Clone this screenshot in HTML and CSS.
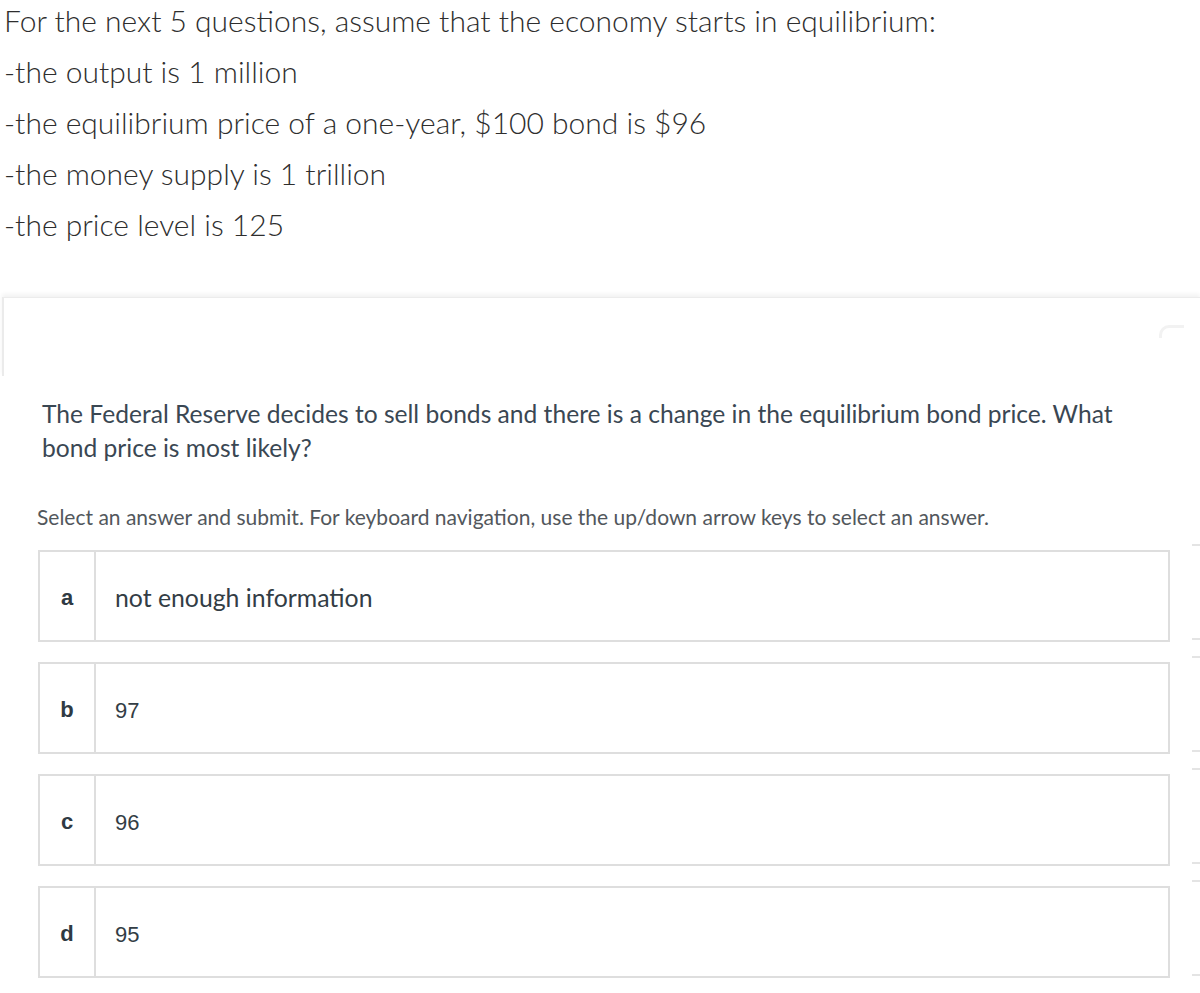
FILE: index.html
```html
<!DOCTYPE html>
<html lang="en">
<head>
<meta charset="utf-8">
<title>Question</title>
<link rel="stylesheet" href="styles.css">
</head>
<body>
<div class="intro">
  <p>For the next 5 questions, assume that the economy starts in equilibrium:</p>
  <p>-the output is 1 million</p>
  <p>-the equilibrium price of a one-year, $100 bond is $96</p>
  <p>-the money supply is 1 trillion</p>
  <p>-the price level is 125</p>
</div>
<div class="card">
  <div class="card-head"><span class="corner"></span></div>
  <div class="question">The Federal Reserve decides to sell bonds and there is a change in the equilibrium bond price. What bond price is most likely?</div>
  <div class="hint">Select an answer and submit. For keyboard navigation, use the up/down arrow keys to select an answer.</div>
  <div class="options">
    <div class="row">
      <div class="option"><div class="letter">a</div><div class="label">not enough information</div></div>
      <div class="stub"></div>
    </div>
    <div class="row">
      <div class="option"><div class="letter">b</div><div class="label num">97</div></div>
      <div class="stub"></div>
    </div>
    <div class="row">
      <div class="option"><div class="letter">c</div><div class="label num">96</div></div>
      <div class="stub"></div>
    </div>
    <div class="row">
      <div class="option"><div class="letter">d</div><div class="label num">95</div></div>
      <div class="stub"></div>
    </div>
  </div>
</div>
</body>
</html>
```

FILE: styles.css
```css
html, body {
  margin: 0;
  padding: 0;
  background: #ffffff;
}
body {
  font-family: "Lato", "Open Sans", sans-serif;
  color: #333333;
  width: 1200px;
  overflow: hidden;
}
.intro {
  padding: 0 0 0 4px;
  margin-top: -5px;
}
.intro p {
  margin: 0;
  font-size: 30px;
  font-weight: 300;
  line-height: 51px;
  color: #2e2e2e;
}
.card {
  margin-top: 47px;
  margin-left: 2px;
}
.card-head {
  position: relative;
  height: 78px;
  border-top: 1px solid #ececec;
  border-left: 2px solid #ebebeb;
  box-shadow: 0 -3px 4px rgba(0, 0, 0, 0.05);
}
.corner {
  position: absolute;
  left: 1155px;
  top: 27px;
  width: 22px;
  height: 10px;
  border-top: 3px solid #f2f2f2;
  border-left: 3px solid #f2f2f2;
  border-top-left-radius: 10px;
}
.question {
  padding: 21px 60px 0 40px;
  font-size: 24.6px;
  line-height: 34px;
  color: #3a4753;
}
.hint {
  padding: 37px 0 0 35px;
  font-size: 21px;
  line-height: 30px;
  color: #52575c;
}
.options {
  padding: 18px 0 0 36px;
  display: flex;
  flex-direction: column;
  gap: 20px;
}
.row {
  display: flex;
  align-items: flex-start;
}
.option {
  width: 1132px;
  height: 92px;
  box-sizing: border-box;
  border: 2px solid #dedede;
  display: flex;
  align-items: center;
}
.letter {
  width: 56px;
  height: 100%;
  border-right: 2px solid #dedede;
  display: flex;
  align-items: center;
  justify-content: center;
  font-family: "Liberation Sans", Arial, sans-serif;
  font-weight: 700;
  font-size: 22px;
  color: #2f3a43;
  padding-top: 3px;
  box-sizing: border-box;
}
.label {
  padding-left: 19px;
  font-size: 24.8px;
  color: #333d45;
  padding-top: 2px;
}
.label.num {
  font-family: "Liberation Sans", Arial, sans-serif;
  font-size: 22px;
  padding-top: 6px;
}
.stub {
  margin-left: 22px;
  margin-top: -6px;
  width: 8px;
  height: 92px;
  border-top: 2px solid #e4e4e4;
  border-bottom: 2px solid #e4e4e4;
}
```
